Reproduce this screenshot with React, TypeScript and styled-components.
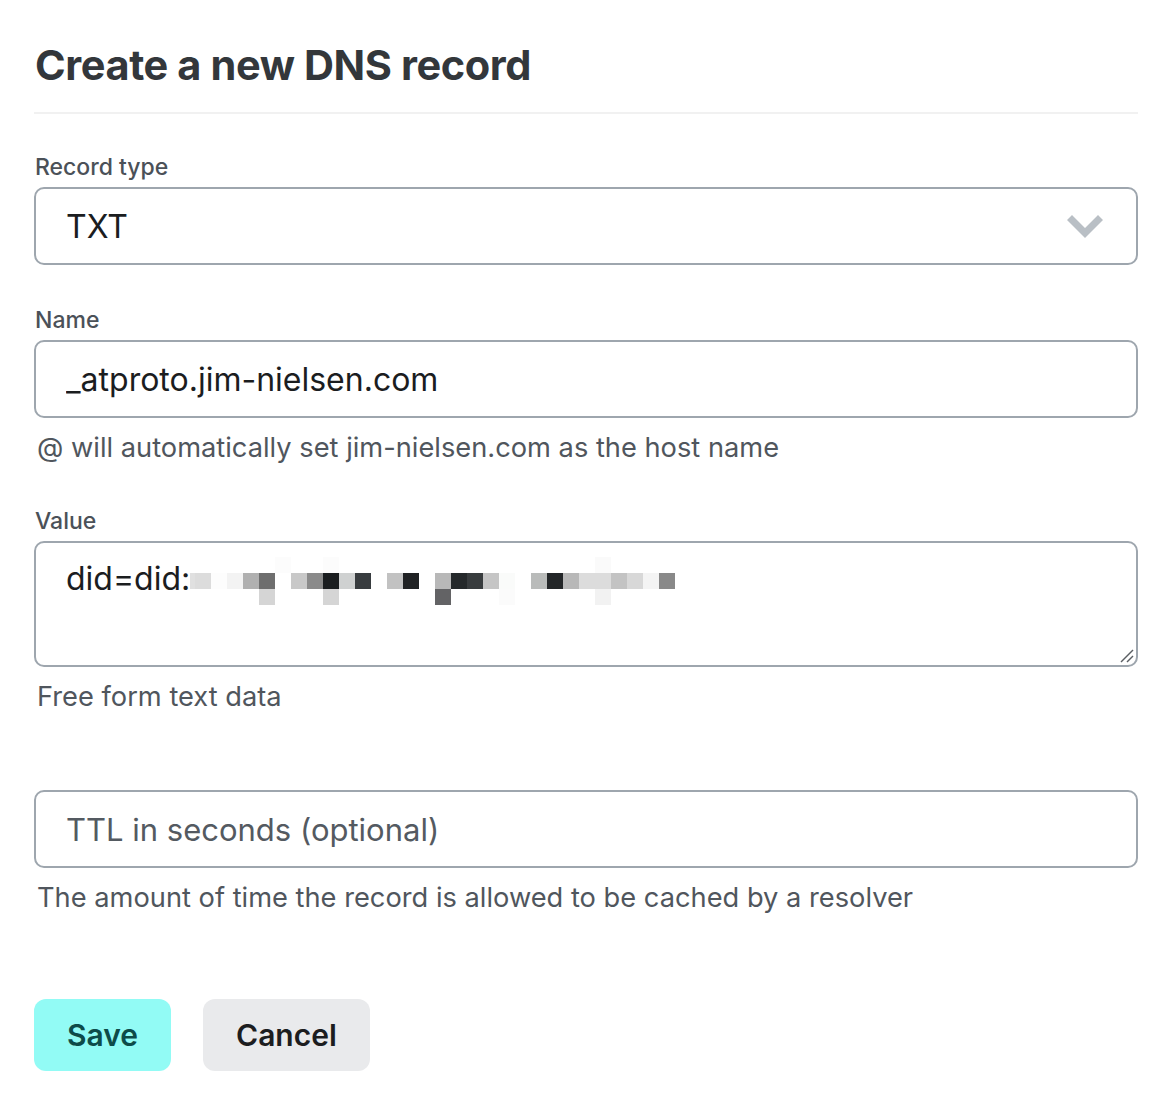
import React from "react";
import styled, { createGlobalStyle } from "styled-components";

const GlobalStyle = createGlobalStyle`
  html, body { margin: 0; padding: 0; background: #ffffff; }
  body { font-family: Inter, "Noto Sans", "Liberation Sans", sans-serif; }
  * { box-sizing: border-box; }
`;

const Page = styled.div`
  padding: 0 38px 40px 34px;
`;

const Title = styled.h1`
  margin: 0;
  padding: 40px 0 22px 1px;
  font-size: 41.5px;
  line-height: 50px;
  font-weight: 700;
  letter-spacing: -0.4px;
  color: #33373b;
  border-bottom: 2px solid #f1f1f1;
`;

const Form = styled.form`
  display: flex;
  flex-direction: column;
  gap: 40px;
  padding-top: 38px;
`;

const Field = styled.div`
  display: flex;
  flex-direction: column;
  gap: 5px;
`;

const Label = styled.label`
  display: block;
  height: 30px;
  padding-left: 1px;
  font-size: 23px;
  line-height: 30px;
  font-weight: 500;
  color: #4b5158;
`;

const boxBase = `
  width: 100%;
  border: 2px solid #9ea6ae;
  border-radius: 10px;
  background: #ffffff;
  font-family: Inter, "Noto Sans", "Liberation Sans", sans-serif;
  font-size: 32px;
  color: #1b1d1f;
`;

const TextInput = styled.input`
  ${boxBase}
  display: block;
  height: 78px;
  padding: 0 30px;
  outline: none;
  &::placeholder { color: #545a61; opacity: 1; font-size: 31px; }
`;

const SelectBox = styled.div`
  ${boxBase}
  height: 78px;
  padding: 0 33px 0 30px;
  display: flex;
  align-items: center;
  justify-content: space-between;
`;

const AreaBox = styled.div`
  ${boxBase}
  position: relative;
  height: 126px;
  padding: 16px 30px;
  line-height: 40px;
  white-space: nowrap;
`;

const Mosaic = styled.svg`
  display: inline-block;
  vertical-align: -7px;
  margin: -8px 0;
`;

const Grip = styled.svg`
  position: absolute;
  right: 2px;
  bottom: 2px;
`;

const Help = styled.p`
  margin: 7px 0 0;
  padding-left: 3px;
  font-size: 27.25px;
  line-height: 36px;
  font-weight: 400;
  color: #50565d;
`;

const Actions = styled.div`
  display: flex;
  gap: 32px;
  margin-top: 83px;
`;

const Button = styled.button<{ $primary?: boolean }>`
  height: 72px;
  padding: 0 33px;
  border: none;
  border-radius: 12px;
  font-family: Inter, "Noto Sans", "Liberation Sans", sans-serif;
  font-size: 30px;
  font-weight: 600;
  background: ${(p) => (p.$primary ? "#92fbf5" : "#e9eaec")};
  color: ${(p) => (p.$primary ? "#0d4b49" : "#1c1d1f")};
  cursor: pointer;
`;

type Cell = { c: string; top?: string; bottom?: string };

const cells: Cell[] = [
  { c: "#dcdcdc" },
  { c: "#fdfdfd" },
  { c: "#f3f3f3" },
  { c: "#b0b0b0" },
  { c: "#6e6e6e", bottom: "#d5d5d5" },
  { c: "#ffffff", top: "#fcfcfc" },
  { c: "#c8c8c8" },
  { c: "#8a8a8a" },
  { c: "#1b1e20", top: "#fcfcfc", bottom: "#d5d5d5" },
  { c: "#cfd1d1" },
  { c: "#383c3f" },
  { c: "#ffffff" },
  { c: "#c2c2c2" },
  { c: "#202224" },
  { c: "#ffffff" },
  { c: "#b8b8b8", bottom: "#636365" },
  { c: "#25292b" },
  { c: "#383c3e" },
  { c: "#c5c5c5" },
  { c: "#fafbfa", bottom: "#fbfbfb" },
  { c: "#ffffff" },
  { c: "#b9bbba" },
  { c: "#232628" },
  { c: "#b8b8b8" },
  { c: "#dcdcdc" },
  { c: "#dcdcdc", top: "#fafafa", bottom: "#f2f2f2" },
  { c: "#c3c3c3" },
  { c: "#d8d8d8" },
  { c: "#f4f4f4" },
  { c: "#898989" },
];

const LEAD = 5;
const CELL = 16;

function Redacted() {
  const w = LEAD + cells.length * CELL;
  return (
    <Mosaic width={w} height={48} viewBox={`0 0 ${w} 48`} aria-hidden="true">
      <rect x={0} y={16} width={LEAD} height={16} fill="#e0e0e0" />
      {cells.map((cell, i) => {
        const x = LEAD + i * CELL;
        return (
          <g key={i}>
            {cell.top && <rect x={x} y={0} width={CELL} height={16} fill={cell.top} />}
            <rect x={x} y={16} width={CELL} height={16} fill={cell.c} />
            {cell.bottom && <rect x={x} y={32} width={CELL} height={16} fill={cell.bottom} />}
          </g>
        );
      })}
    </Mosaic>
  );
}

function Chevron() {
  return (
    <svg width="36" height="23" viewBox="0 0 36 23" aria-hidden="true">
      <polygon points="0,5 5,0 18,13 31,0 36,5 18,23" fill="#b9bfc5" />
    </svg>
  );
}

export default function App() {
  return (
    <>
      <GlobalStyle />
      <Page>
        <Title>Create a new DNS record</Title>
        <Form onSubmit={(e) => e.preventDefault()}>
          <Field>
            <Label>Record type</Label>
            <SelectBox>
              <span>TXT</span>
              <Chevron />
            </SelectBox>
          </Field>
          <Field>
            <Label htmlFor="name">Name</Label>
            <TextInput id="name" readOnly value="_atproto.jim-nielsen.com" />
            <Help>@ will automatically set jim-nielsen.com as the host name</Help>
          </Field>
          <Field>
            <Label>Value</Label>
            <AreaBox>
              did=did:
              <Redacted />
              <Grip width="14" height="14" viewBox="0 0 14 14" aria-hidden="true">
                <line x1="1" y1="13" x2="13" y2="1" stroke="#5a5e63" strokeWidth="1.4" />
                <line x1="7" y1="13" x2="13" y2="7" stroke="#5a5e63" strokeWidth="1.4" />
              </Grip>
            </AreaBox>
            <Help>Free form text data</Help>
          </Field>
          <Field>
            <Label aria-hidden="true" />
            <TextInput placeholder="TTL in seconds (optional)" />
            <Help>The amount of time the record is allowed to be cached by a resolver</Help>
          </Field>
        </Form>
        <Actions>
          <Button $primary type="button">Save</Button>
          <Button type="button">Cancel</Button>
        </Actions>
      </Page>
    </>
  );
}
